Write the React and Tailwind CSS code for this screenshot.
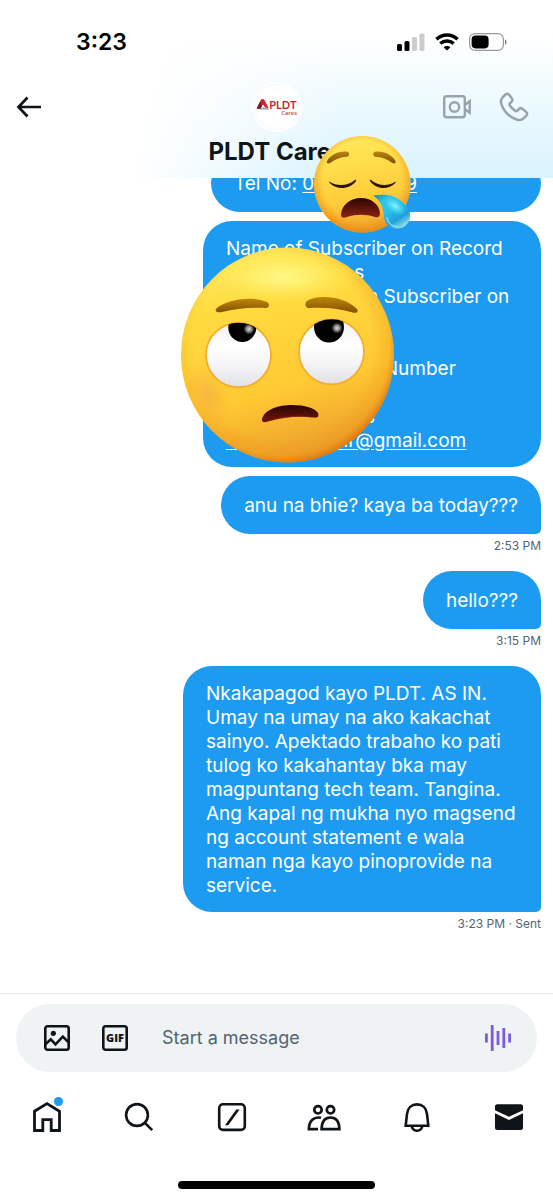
import { useState } from 'react';
import clsx from 'clsx';

const NBSP = '\u00a0';

const iconClass = 'h-8 w-8';

function SignalIcon() {
  return (
    <svg viewBox="0 0 28 18" className="h-[18px] w-7" aria-hidden="true">
      <rect x="0" y="11" width="5" height="7" rx="1.5" fill="#000" />
      <rect x="7.5" y="8" width="5" height="10" rx="1.5" fill="#000" />
      <rect x="15" y="4" width="5" height="14" rx="1.5" fill="#ccc" />
      <rect x="22.5" y="0.5" width="5" height="17.5" rx="1.5" fill="#ccc" />
    </svg>
  );
}

function WifiIcon() {
  return (
    <svg viewBox="0 0 24 18" className="h-[18px] w-6" fill="none" stroke="#000" strokeWidth="3.4" aria-hidden="true">
      <path d="M1.4 6.3C7.4.6 16.6.6 22.6 6.3" />
      <path d="M5.3 10.6c3.8-3.5 9.6-3.5 13.4 0" />
      <path d="M12 17.6l-3.4-3.4c1.9-1.7 4.9-1.7 6.8 0z" fill="#000" stroke="none" />
    </svg>
  );
}

function BatteryIcon() {
  return (
    <svg viewBox="0 0 39 18" className="h-[18px] w-[39px]" aria-hidden="true">
      <rect x="0.6" y="0.6" width="33.8" height="16.8" rx="5.4" fill="#fff" stroke="#999" strokeWidth="1.2" />
      <rect x="2.6" y="2.6" width="17" height="12.8" rx="3.8" fill="#000" />
      <path d="M36 6.2c1.9.7 1.9 4.9 0 5.6z" fill="#777" />
    </svg>
  );
}

function Avatar() {
  return (
    <svg viewBox="0 0 50 50" className="h-[50px] w-[50px] rounded-full bg-white" role="img" aria-label="PLDT Cares">
      <circle cx="25" cy="25" r="22.6" fill="#fff" stroke="#f3f5f6" strokeWidth="0.8" />
      <path d="M4.6 26.500l4.300-8.400c.8-1.500 2.700-1.500 3.500 0l4.200 7.800-2.600.4-3.100-3.900-2.200 3.500z" fill="#d7202f" />
      <path d="M4.600 26.500l3.800-7.200 1.400 4.800-1.200 3.200z" fill="#6d1f2b" />
      <path d="M7.800 27.600c1.600-2.800 5-3.100 8.200-1.500l.8 1.700z" fill="#a3a6ab" />
      <text x="17.300" y="26.500" fontSize="11" fontWeight="700" fill="#cf1f35" fontFamily="Lato, sans-serif">PLDT</text>
      <text x="29.300" y="33.300" fontSize="5.800" fontWeight="600" fill="#d4404f" fontFamily="Open Sans, sans-serif">Cares</text>
    </svg>
  );
}

function RollingEyesSticker() {
  return (
    <svg viewBox="0 0 215 216" className="h-[216px] w-[215px]" role="img" aria-label="Face with rolling eyes">
      <defs>
        <clipPath id="bigClip">
          <ellipse cx="107.5" cy="108" rx="106.5" ry="107.5" />
        </clipPath>
        <clipPath id="leftEye">
          <ellipse cx="58.5" cy="108" rx="32.5" ry="32.2" />
        </clipPath>
        <clipPath id="rightEye">
          <ellipse cx="151.5" cy="104.8" rx="32.5" ry="32.5" />
        </clipPath>
        <linearGradient id="bigFace" x1="0.35" y1="0" x2="0.62" y2="1">
          <stop offset="0" stopColor="#ffec60" />
          <stop offset="0.22" stopColor="#ffdc41" />
          <stop offset="0.65" stopColor="#ffc933" />
          <stop offset="1" stopColor="#e99a2a" />
        </linearGradient>
        <radialGradient id="bigEdge" cx="0.47" cy="0.46" r="0.54">
          <stop offset="0.78" stopColor="#f08a12" stopOpacity="0" />
          <stop offset="0.93" stopColor="#ee9016" stopOpacity="0.3" />
          <stop offset="1" stopColor="#d86f08" stopOpacity="0.7" />
        </radialGradient>
        <radialGradient id="bigShine">
          <stop offset="0" stopColor="#fff986" />
          <stop offset="0.4" stopColor="#fff478" stopOpacity="0.7" />
          <stop offset="1" stopColor="#ffe650" stopOpacity="0" />
        </radialGradient>
        <radialGradient id="bigBlush">
          <stop offset="0" stopColor="#efa050" stopOpacity="0.5" />
          <stop offset="1" stopColor="#f1a43a" stopOpacity="0" />
        </radialGradient>
        <linearGradient id="eyeWhite" x1="0" y1="0" x2="0" y2="1">
          <stop offset="0" stopColor="#f0f0f0" />
          <stop offset="0.35" stopColor="#fff" />
          <stop offset="0.7" stopColor="#f4f4f6" />
          <stop offset="1" stopColor="#e0e0e3" />
        </linearGradient>
        <radialGradient id="glint">
          <stop offset="0" stopColor="#ddd" />
          <stop offset="0.5" stopColor="#888" />
          <stop offset="1" stopColor="#000" />
        </radialGradient>
        <linearGradient id="brow" x1="0" y1="0" x2="0" y2="1">
          <stop offset="0" stopColor="#bc860a" />
          <stop offset="1" stopColor="#855004" />
        </linearGradient>
        <linearGradient id="bigMouth" x1="0" y1="0" x2="0" y2="1">
          <stop offset="0" stopColor="#2a0503" />
          <stop offset="1" stopColor="#76160c" />
        </linearGradient>
      </defs>
      <g clipPath="url(#bigClip)">
        <rect width="215" height="216" fill="url(#bigFace)" />
        <rect width="215" height="216" fill="url(#bigEdge)" />
        <ellipse cx="103" cy="30" rx="75" ry="27" fill="url(#bigShine)" />
        <ellipse cx="28" cy="148" rx="18" ry="34" fill="url(#bigBlush)" transform="rotate(-25 28 148)" />
      </g>
      <path d="M36 62c8-9 36-14 51-7 3 2 2.500 5.500-1 6-17-1-30 .9-44 4-4 1-7.500-.5-6-3z" fill="url(#brow)" />
      <path d="M126 55c8-8 38-7 51 7 2 2.500-.5 4.500-4 3.600-14-4-28-5.800-43-4.600-4 .3-5.500-2.800-4-6z" fill="url(#brow)" />
      <ellipse cx="58.500" cy="108" rx="32.500" ry="32.200" fill="url(#eyeWhite)" stroke="#f5ac2c" strokeWidth="1.800" />
      <ellipse cx="151.500" cy="104.800" rx="32.500" ry="32.500" fill="url(#eyeWhite)" stroke="#f5ac2c" strokeWidth="1.800" />
      <g clipPath="url(#leftEye)">
        <ellipse cx="62.300" cy="80.500" rx="14" ry="14.500" fill="#000" />
        <circle cx="69" cy="82" r="5.500" fill="url(#glint)" />
      </g>
      <g clipPath="url(#rightEye)">
        <ellipse cx="149" cy="80" rx="15" ry="15.500" fill="#000" />
        <circle cx="157" cy="81" r="5.500" fill="url(#glint)" />
      </g>
      <path d="M82 172c3-10 17-14 30-14s23 3 26 8c1.500 4-1 5-4 4.600-15-2-32-.6-46 3.900-4 1.400-6.800.5-6-2.500z" fill="url(#bigMouth)" />
      <path d="M89 174.100c5-4.600 35-7.600 44-3.600-16-1.900-30-.6-44 3.600z" fill="#9c2b1b" opacity="0.5" />
    </svg>
  );
}

function SleepySticker() {
  return (
    <svg viewBox="0 0 100 99" className="h-[99px] w-[100px]" role="img" aria-label="Sleepy face">
      <defs>
        <linearGradient id="smallFace" x1="0.4" y1="0" x2="0.6" y2="1">
          <stop offset="0" stopColor="#ffe95a" />
          <stop offset="0.25" stopColor="#ffdf4c" />
          <stop offset="0.65" stopColor="#ffcb3a" />
          <stop offset="1" stopColor="#eea02c" />
        </linearGradient>
        <radialGradient id="smallEdge" cx="0.5" cy="0.46" r="0.54">
          <stop offset="0.76" stopColor="#f08a12" stopOpacity="0" />
          <stop offset="1" stopColor="#e07f10" stopOpacity="0.65" />
        </radialGradient>
        <linearGradient id="smallBrow" x1="0" y1="0" x2="0" y2="1">
          <stop offset="0" stopColor="#b98513" />
          <stop offset="1" stopColor="#805006" />
        </linearGradient>
        <linearGradient id="smallMouth" x1="0" y1="0" x2="0" y2="1">
          <stop offset="0" stopColor="#2c0503" />
          <stop offset="1" stopColor="#8d2213" />
        </linearGradient>
        <linearGradient id="drop" x1="0" y1="0" x2="0.7" y2="1">
          <stop offset="0" stopColor="#1587b8" />
          <stop offset="0.25" stopColor="#2fc4e8" />
          <stop offset="0.5" stopColor="#2bc3ee" />
          <stop offset="0.8" stopColor="#209fdb" />
          <stop offset="1" stopColor="#8adce8" />
        </linearGradient>
        <radialGradient id="dropShine">
          <stop offset="0" stopColor="#93f4ff" />
          <stop offset="1" stopColor="#4ddcf6" stopOpacity="0" />
        </radialGradient>
      </defs>
      <circle cx="49.3" cy="49.3" r="48.300" fill="url(#smallFace)" />
      <circle cx="49.3" cy="49.3" r="48.300" fill="url(#smallEdge)" />
      <path d="M14 26c3-6 12-10.500 20.500-9.300 2.500.8 2 4.700-.5 5-6.500.1-11.500 2.300-16.500 6-2 1.400-4.500.6-3.500-1.700z" fill="url(#smallBrow)" />
      <path d="M82.500 26c-3-6-12-10.500-20.500-9.300-2.500.8-2 4.700.5 5 6.500.1 11.500 2.300 16.500 6 2 1.400 4.500.6 3.500-1.700z" fill="url(#smallBrow)" />
      <path d="M17 47c7 4.500 18 4 25-2 1-.6 1.600 0 1 1-6 8.500-19 9.500-26.300 2-.7-.8-.4-1.400.3-1z" fill="#2b1604" />
      <path d="M82 47c-7 4.500-17 4-24-2-1-.6-1.600 0-1 1 6 8.500 18 9.500 25.300 2 .7-.8.4-1.400-.3-1z" fill="#2b1604" />
      <path d="M28 79c1-9 9-16 20-16 10 0 18 6 19 15 0 4-2 5-5 4-9-3-19-3-28 0-4 1.600-6.300.6-6-3z" fill="url(#smallMouth)" />
      <path d="M60 60.500c7-1.200 15-1 20 .8 6 2.300 10 5.700 13 10.200 3.500 4 5 8 4 12-1.600 6-6.500 10-12.500 10-4.500 0-8.500-1.500-10.700-4.500-2.300-3-2.700-6-3.200-10-.8-8-3.600-14-10.600-18.500z" fill="url(#drop)" />
      <ellipse cx="82" cy="71" rx="13" ry="7" fill="url(#dropShine)" transform="rotate(36 82 71)" />
      <path d="M74 83c1 5 5 8.500 10.500 8.700" fill="none" stroke="#a5e8e4" strokeWidth="1.800" strokeLinecap="round" opacity="0.6" />
    </svg>
  );
}

const navItems = [
  {
    label: 'Home',
    dot: true,
    icon: (
      <path d="M3.500 10.200L16 2.600l12.500 7.600v19.300H20.200V18.700h-8.400v10.800H3.500z" fill="none" stroke="#0f1419" strokeWidth="2.800" />
    ),
  },
  {
    label: 'Search',
    icon: (
      <g fill="none" stroke="#0f1419" strokeWidth="2.600">
        <circle cx="14" cy="14" r="10.900" />
        <path d="M21.600 21.600l7.600 7.600" />
      </g>
    ),
  },
  {
    label: 'Grok',
    icon: (
      <>
        <rect x="3.200" y="3.300" width="25.600" height="25.600" rx="3.800" fill="none" stroke="#0f1419" strokeWidth="2.600" />
        <path d="M20.300 8.500h3.300L12.300 24.300H9z" fill="#0f1419" />
      </>
    ),
  },
  {
    label: 'Communities',
    icon: (
      <g fill="none" stroke="#0f1419" strokeWidth="2.700">
        <circle cx="10" cy="8.800" r="3.700" />
        <circle cx="22.500" cy="8.800" r="3.700" />
        <path d="M13 16.800C6 15.300.9 19.500.9 28.200h9.200" />
        <path d="M13.600 28.200c.2-7.700 3.500-11.700 8.900-11.700s8.700 4 8.900 11.700z" />
      </g>
    ),
  },
  {
    label: 'Notifications',
    icon: (
      <g fill="none" stroke="#0f1419" strokeWidth="2.600">
        <path d="M4.700 24.700L6 12.800C6.600 7 10.700 3.400 16 3.400S25.400 7 26 12.800l1.300 11.900z" />
        <path d="M10.600 25c.7 3 2.700 4.700 5.400 4.700s4.700-1.700 5.400-4.700" />
      </g>
    ),
  },
  {
    label: 'Messages',
    icon: (
      <g fill="#0f1419">
        <path d="M2 5.500C2 4.100 3 3.200 4.300 3.200h23.400C29 3.200 30 4.100 30 5.500v3.700l-14 6.600L2 9.200z" />
        <path d="M2 12.300l14 6.600 14-6.600v14.400c0 1.300-1 2.300-2.300 2.300H4.300C3 29 2 28 2 26.700z" />
      </g>
    ),
  },
];

function Bubble({ className, last, children }) {
  return (
    <div
      className={clsx(
        'flex min-h-[58px] max-w-full items-center bg-[#1d9bf0] px-[23px] pt-4 pb-[14px] text-[19px] leading-6 text-white',
        last ? 'rounded-[29px] rounded-br-[5px]' : 'rounded-[29px]',
        className
      )}
    >
      <p>{children}</p>
    </div>
  );
}

function Stamp({ children }) {
  return <p className="mt-1 text-xs leading-4 text-[#536471]">{children}</p>;
}

export default function App() {
  const [draft, setDraft] = useState('');

  return (
    <div className="relative flex min-h-screen flex-col overflow-hidden bg-white font-['Inter','Liberation_Sans',sans-serif] text-[#0f1419]">
      <header className="relative z-10 bg-[linear-gradient(100deg,#fff_28%,rgba(255,255,255,0)_62%),linear-gradient(to_bottom,#fff_20%,#d9f3fe)] pb-[11px]">
        <div className="flex items-center justify-between pt-7 pr-[45px] pl-[76px]">
          <span className="text-[23px] leading-7 font-semibold text-black">3:23</span>
          <div className="flex items-center gap-[10px]">
            <SignalIcon />
            <WifiIcon />
            <BatteryIcon />
          </div>
        </div>

        <div className="mt-[26px] grid grid-cols-[1fr_auto_1fr] items-center px-4">
          <button type="button" aria-label="Back" className="justify-self-start">
            <svg viewBox="0 0 26 22" className="h-[22px] w-[26px]" fill="none" stroke="#0f1419" strokeWidth="2.700">
              <path d="M11.500 1.500L2.500 11l9 9.500M2.500 11H25" />
            </svg>
          </button>
          <Avatar />
          <div className="mr-2 flex items-center gap-7 justify-self-end">
            <button type="button" aria-label="Video call">
              <svg viewBox="0 0 28 24" className="h-6 w-7" fill="none" stroke="#9aa3a9" strokeWidth="2.400">
                <rect x="1.200" y="1.300" width="20.600" height="21" rx="2.200" />
                <circle cx="11.500" cy="12" r="4.700" />
                <path d="M22 9.800l4.700-3.600v11.600L22 14.200" />
              </svg>
            </button>
            <button type="button" aria-label="Audio call">
              <svg viewBox="0 0 30 30" className="h-[30px] w-[30px]" fill="none" stroke="#9aa3a9" strokeWidth="2.500" strokeLinejoin="round">
                <path d="M9.900 2.600c-.9-1-2.300-1-3.300-.1L3.800 5.200C2 7.100 1.500 9.300 2.300 11.900c2.500 7.700 8 13.200 15.800 15.800 2.600.8 4.800.3 6.700-1.500l2.700-2.800c.9-1 .9-2.400-.1-3.300l-4.100-3.300c-.9-.8-2.100-.8-3 0l-2.100 1.900c-.6.500-1.400.6-2.100.1-2.200-1.500-3.900-3.200-5.300-5.300-.4-.7-.4-1.500.1-2.100l1.900-2c.8-.9.8-2.100.1-3z" />
              </svg>
            </button>
          </div>
        </div>
        <h1 className="mt-[5px] text-center text-2xl leading-[30px] font-bold">PLDT Cares</h1>
      </header>

      <main className="flex flex-1 flex-col items-end px-3">
        <Bubble className="-mt-6 w-[330px]">
          Tel No: <a href="#tel" className="underline underline-offset-2">0{NBSP.repeat(17)}9</a>
        </Bubble>
        <Bubble className="mt-[9px] w-[338px]">
          Name of Subscriber on Record
          <br />
          {NBSP.repeat(24)}s
          <br />
          Relationship with Subscriber on
          <br />
          Record
          <br />
          <br />
          Contact{NBSP.repeat(3)}Mobile{NBSP.repeat(2)}Number
          <br />
          <br />
          {NBSP.repeat(26)}s
          <br />
          <a href="#email" className="underline underline-offset-2">{NBSP.repeat(22)}ir@gmail.com</a>
        </Bubble>
        <Bubble last className="mt-[9px]">anu na bhie? kaya ba today???</Bubble>
        <Stamp>2:53 PM</Stamp>

        <Bubble last className="mt-[17px]">hello???</Bubble>
        <Stamp>3:15 PM</Stamp>

        <Bubble last className="mt-[17px] w-[358px]">
          Nkakapagod kayo PLDT. AS IN.
          <br />
          Umay na umay na ako kakachat
          <br />
          sainyo. Apektado trabaho ko pati
          <br />
          tulog ko kakahantay bka may
          <br />
          magpuntang tech team. Tangina.
          <br />
          Ang kapal ng mukha nyo magsend
          <br />
          ng account statement e wala
          <br />
          naman nga kayo pinoprovide na
          <br />
          service.
        </Bubble>
        <Stamp>3:23 PM · Sent</Stamp>
      </main>

      <footer className="border-t border-[#e6eaec] pt-[10px] pb-[11px]">
        <div className="mx-4 flex h-[68px] items-center rounded-full bg-[#eff3f4] pr-[26px] pl-7">
          <button type="button" aria-label="Add photo">
            <svg viewBox="0 0 26 26" className="h-[26px] w-[26px]" fill="none" stroke="#0f1419" strokeWidth="2.600">
              <rect x="1.300" y="1.300" width="23.400" height="23.400" rx="2.200" />
              <circle cx="9.300" cy="8.300" r="2.600" fill="#0f1419" stroke="none" />
              <path d="M1.500 19.300l5.300-5 4.700 5 7.300-7.600 6 6" />
            </svg>
          </button>
          <button type="button" aria-label="Add GIF" className="ml-8">
            <svg viewBox="0 0 26 26" className="h-[26px] w-[26px]">
              <rect x="1.300" y="1.300" width="23.400" height="23.400" rx="2.200" fill="none" stroke="#0f1419" strokeWidth="2.600" />
              <text x="13" y="17" textAnchor="middle" fontSize="11" fontWeight="800" fill="#0f1419" fontFamily="Open Sans, sans-serif">GIF</text>
            </svg>
          </button>
          <input
            type="text"
            aria-label="Start a message"
            placeholder="Start a message"
            value={draft}
            onChange={(event) => setDraft(event.target.value)}
            className="ml-[34px] min-w-0 flex-1 bg-transparent text-lg leading-6 outline-none placeholder:text-[#536471]"
          />
          <button type="button" aria-label="Record voice message">
            <svg viewBox="0 0 26 26" className="h-[26px] w-[26px]" fill="#7b5be0">
              <rect x="0" y="8.500" width="2.800" height="9" />
              <rect x="5.800" y="0" width="2.800" height="26" />
              <rect x="11.600" y="6" width="2.800" height="14" />
              <rect x="17.400" y="3" width="2.800" height="20" />
              <rect x="23.200" y="8.500" width="2.800" height="9" />
            </svg>
          </button>
        </div>

        <nav className="mt-[29px] flex items-center justify-between pr-7 pl-[31px]">
          {navItems.map((item) => (
            <button key={item.label} type="button" aria-label={item.label} className="relative">
              <svg viewBox="0 0 32 32" className={iconClass} overflow="visible">
                {item.icon}
              </svg>
              {item.dot && <span className="absolute -top-1 right-0 h-[9px] w-[9px] rounded-full bg-[#1d9bf0]" />}
            </button>
          ))}
        </nav>
        <div className="mx-auto mt-12 h-2 w-[197px] rounded-full bg-black" />
      </footer>

      <div className="absolute top-[135px] left-[313px] z-20">
        <SleepySticker />
      </div>
      <div className="absolute top-[247px] left-[180px] z-10">
        <RollingEyesSticker />
      </div>
    </div>
  );
}
